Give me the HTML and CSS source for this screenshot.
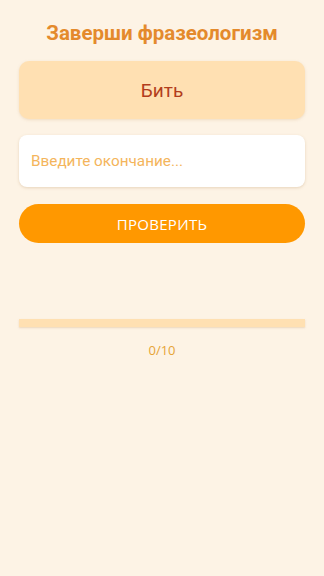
FILE: index.html
```html
<!DOCTYPE html>
<html lang="ru">
<head>
<meta charset="utf-8">
<link rel="stylesheet" href="styles.css">
</head>
<body>
<main class="screen">
  <h1 class="title">Заверши фразеологизм</h1>
  <div class="phrase-card">Бить</div>
  <div class="input-box"><span class="placeholder">Введите окончание...</span></div>
  <button class="check-btn">ПРОВЕРИТЬ</button>
  <div class="progress"><div class="progress-fill"></div></div>
  <div class="counter">0/10</div>
</main>
</body>
</html>
```
FILE: styles.css
```css
html, body {
  margin: 0;
  padding: 0;
  background: #fdf3e5;
  height: 100%;
}
.screen {
  display: flex;
  flex-direction: column;
  padding: 0 19px;
  font-family: Roboto, "Noto Sans", sans-serif;
}
.title {
  margin: 20px 0 0;
  height: 26px;
  line-height: 26px;
  text-align: center;
  font-size: 20.5px;
  font-weight: 700;
  color: #e48a2c;
}
.phrase-card {
  margin-top: 15px;
  height: 58px;
  border-radius: 10px;
  background: #ffe0b2;
  box-shadow: 0 1px 3px rgba(200, 150, 90, 0.25);
  display: flex;
  align-items: center;
  justify-content: center;
  font-size: 19px;
  color: #b23d1c;
}
.input-box {
  margin-top: 16px;
  height: 52px;
  border-radius: 8px;
  background: #ffffff;
  box-shadow: 0 1px 3px rgba(180, 140, 90, 0.3);
  display: flex;
  align-items: center;
  padding-left: 12px;
}
.placeholder {
  font-size: 15.3px;
  color: #f4b55c;
}
.check-btn {
  margin-top: 17px;
  height: 39px;
  border: none;
  border-radius: 20px;
  background: #ff9800;
  color: #ffffff;
  font-family: "Open Sans", Roboto, sans-serif;
  font-size: 15px;
  letter-spacing: 0.3px;
  padding: 0;
}
.progress {
  margin-top: 76px;
  height: 8px;
  background: #ffe0b2;
  box-shadow: 0 1px 2px rgba(200, 150, 90, 0.3);
}
.progress-fill {
  width: 0;
  height: 100%;
}
.counter {
  margin-top: 14px;
  text-align: center;
  font-size: 13px;
  color: #e6a436;
  font-family: "Open Sans", Roboto, sans-serif;
}
```
